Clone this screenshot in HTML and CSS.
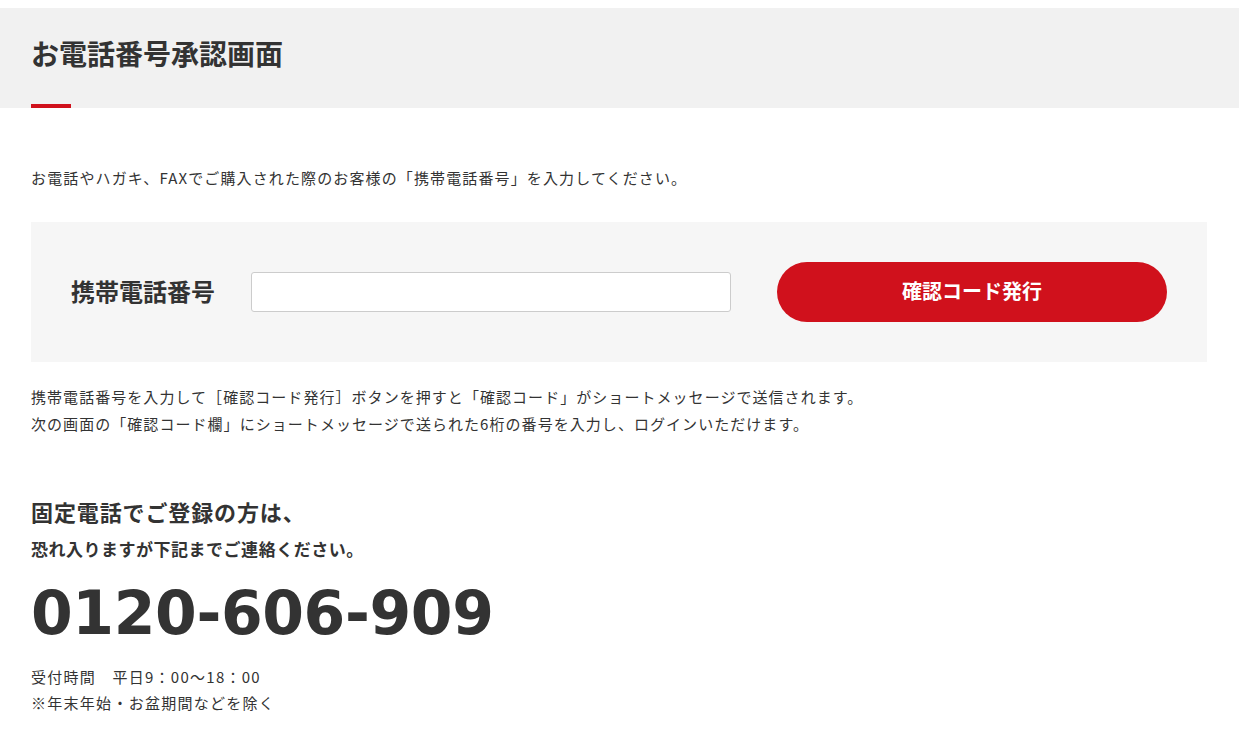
FILE: index.html
```html
<html>
    <head>
        <meta charset="UTF-8" />
        <link rel="stylesheet" href="styles.css">
    </head>
    <body>
        <div class="page_head">
            <h1 class="page_title">お電話番号承認画面</h1>
        </div>
        <div class="main">
            <p class="lead">お電話やハガキ、FAXでご購入された際のお客様の「携帯電話番号」を入力してください。</p>
            <div class="phone_form">
                <label class="phone_label" for="tel">携帯電話番号</label>
                <input class="phone_input" id="tel" type="tel" />
                <a href="javascript:;" class="issue_button">確認コード発行</a>
            </div>
            <p class="note">
                携帯電話番号を入力して［確認コード発行］ボタンを押すと「確認コード」がショートメッセージで送信されます。<br />
                次の画面の「確認コード欄」にショートメッセージで送られた6桁の番号を入力し、ログインいただけます。
            </p>
            <div class="landline">
                <h2 class="landline_title">固定電話でご登録の方は、</h2>
                <p class="landline_sub">恐れ入りますが下記までご連絡ください。</p>
                <div class="tel_number">0120-606-909</div>
                <p class="hours">
                    受付時間　平日9：00〜18：00<br />
                    ※年末年始・お盆期間などを除く
                </p>
            </div>
        </div>
    </body>
</html>
```

FILE: styles.css
```css
* {
    box-sizing: border-box;
}
body {
    margin: 0;
    padding-top: 8px;
    font-family: "Noto Sans CJK JP", sans-serif;
    color: #333;
}
p, h1, h2 {
    margin: 0;
}

.page_head {
    position: relative;
    height: 100px;
    padding: 24px 31px 0;
    background: #f1f1f1;
}
.page_title {
    font-size: 28px;
    line-height: 42px;
    font-weight: bold;
}
.page_head::after {
    content: "";
    position: absolute;
    left: 31px;
    bottom: 0;
    width: 40px;
    height: 4px;
    background: #d0111c;
}

.main {
    padding: 0 32px 40px 31px;
}

.lead {
    margin-top: 56px;
    font-size: 15px;
    line-height: 27px;
    letter-spacing: 0.075em;
}

.phone_form {
    display: flex;
    align-items: center;
    margin-top: 31px;
    padding: 40px;
    background: #f6f6f6;
}
.phone_label {
    width: 142px;
    margin-right: 38px;
    padding-bottom: 3px;
    font-size: 24px;
    font-weight: bold;
    white-space: nowrap;
}
.phone_input {
    width: 480px;
    height: 40px;
    margin-right: 46px;
    border: 1px solid #ccc;
    border-radius: 3px;
    background: #fff;
    font-size: 16px;
    padding: 0 10px;
}
.issue_button {
    display: flex;
    align-items: center;
    justify-content: center;
    width: 390px;
    height: 60px;
    padding-bottom: 3px;
    border-radius: 30px;
    background: #d0111c;
    color: #fff;
    font-size: 20px;
    font-weight: bold;
    text-decoration: none;
}

.note {
    margin-top: 21px;
    font-size: 15px;
    line-height: 27px;
    letter-spacing: 0.07em;
}

.landline {
    margin-top: 57px;
}
.landline_title {
    font-size: 22px;
    line-height: 34px;
    letter-spacing: 0.04em;
    font-weight: bold;
}
.landline_sub {
    margin-top: 3px;
    font-size: 17px;
    line-height: 36px;
    letter-spacing: 0.03em;
    font-weight: bold;
}
.tel_number {
    margin-top: 16px;
    font-family: "DejaVu Sans", sans-serif;
    font-size: 60px;
    line-height: 60px;
    font-weight: bold;
    letter-spacing: -0.4px;
}
.hours {
    margin-top: 21px;
    font-size: 15px;
    line-height: 26px;
    letter-spacing: 0.085em;
}
```
